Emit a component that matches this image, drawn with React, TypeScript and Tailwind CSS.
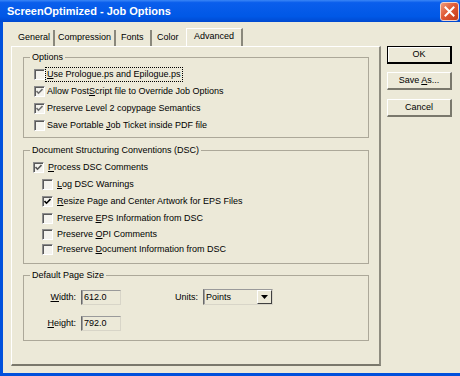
import React from "react";

function Check({ color }: { color: string }) {
  return (
    <svg width="7" height="7" viewBox="0 0 7 7" className="absolute left-[1px] top-[1px]">
      <path d="M0.5 3 L2.5 5.2 L6.5 1" fill="none" stroke={color} strokeWidth="1.6" />
    </svg>
  );
}

function Box({ checked, color = "#000" }: { checked?: boolean; color?: string }) {
  return (
    <span className="relative block w-[11px] h-[11px] shrink-0 border border-t-[#8c8c8c] border-l-[#8c8c8c] border-r-white border-b-white bg-[#f4f3ee] shadow-[inset_1px_1px_0_#5a5a5a]">
      {checked ? <Check color={color} /> : null}
    </span>
  );
}

function U({ children }: { children: React.ReactNode }) {
  return <span className="underline underline-offset-[1px]">{children}</span>;
}

function Row({
  h,
  checked,
  color,
  boxLeft,
  gap,
  focus,
  children,
}: {
  h: string;
  checked?: boolean;
  color?: string;
  boxLeft: string;
  gap: string;
  focus?: boolean;
  children: React.ReactNode;
}) {
  return (
    <div className={`flex items-center ${h} ${boxLeft}`}>
      <Box checked={checked} color={color} />
      <span className={`${gap} whitespace-nowrap leading-[11px] ${focus ? "outline outline-1 outline-dotted outline-[#000] outline-offset-[1px]" : ""}`}>
        {children}
      </span>
    </div>
  );
}

function Field({ value }: { value: string }) {
  return (
    <div className="w-[40px] h-[15px] border border-t-[#9a9a9a] border-l-[#6a6a6a] border-r-[#d8d5c8] border-b-[#d8d5c8] shadow-[inset_1px_0_0_#a0a0a0] bg-[#ECE9D8] pl-[2px] flex items-center leading-[11px]">
      {value}
    </div>
  );
}

export default function App() {
  return (
    <div className="w-[460px] h-[376px] flex flex-col bg-[#0050DC] overflow-hidden font-['Liberation_Sans',Arial,sans-serif] text-[9px] text-black">
      {/* title bar */}
      <div className="h-[22px] shrink-0 flex items-center justify-between pl-[7px] pr-[1px] bg-[linear-gradient(to_bottom,#3A86F6_0%,#0A5EEC_12%,#0058E6_75%,#0049D0_100%)]">
        <span className="text-white font-bold text-[11px] leading-[12px]">
          ScreenOptimized - Job Options
        </span>
        <div className="w-[19px] h-[19px] rounded-[3px] border border-[#f2d2c8] bg-[linear-gradient(135deg,#EE9A7C_0%,#E05A36_45%,#C53A18_100%)] flex items-center justify-center">
          <svg width="11" height="11" viewBox="0 0 11 11">
            <path d="M1.5 1.5 L9.5 9.5 M9.5 1.5 L1.5 9.5" stroke="#fff" strokeWidth="2" strokeLinecap="square" />
          </svg>
        </div>
      </div>

      {/* body */}
      <div className="flex-1 flex pl-[3px] pb-[3px]">
        <div className="flex-1 bg-[#ECE9D8] flex pl-[8px] pt-[6px] gap-[6px]">
          {/* tab control */}
          <div className="w-[370px] flex flex-col">
            <div className="h-[18px] flex items-end">
              <div className="h-[16px] w-[44px] pl-[7px] flex items-center border-r-2 border-r-[#8a887c]">
                General
              </div>
              <div className="h-[16px] w-[61px] pl-[3px] flex items-center border-r-2 border-r-[#8a887c]">
                Compression
              </div>
              <div className="h-[16px] w-[36px] pl-[5px] flex items-center border-r-2 border-r-[#8a887c]">
                Fonts
              </div>
              <div className="h-[16px] w-[34px] pl-[5px] flex items-center">Color</div>
              <div className="h-[18px] w-[57px] pl-[7px] pb-[2px] flex items-center border-l border-l-white border-t border-t-white border-r-2 border-r-[#8a887c]">
                Advanced
              </div>
            </div>
            <div className="h-[320px] flex flex-col border-t border-l border-t-white border-l-white border-r-2 border-b-2 border-r-[#8e8c80] border-b-[#7a786c] pl-[11px] pr-[10px]">
              {/* Options */}
              <fieldset className="mt-[5px] border border-[#aca899] pb-[3px]">
                <legend className="ml-[6px] px-[2px] leading-[10px]">Options</legend>
                <div className="pt-[4px]">
                  <Row h="h-[17px]" boxLeft="pl-[10px]" gap="ml-[2px]" focus>
                    <U>U</U>se Prologue.ps and Epilogue.ps
                  </Row>
                  <Row h="h-[17px]" boxLeft="pl-[10px]" gap="ml-[2px]" checked color="#6e6e6e">
                    Allow Post<U>S</U>cript file to Override Job Options
                  </Row>
                  <Row h="h-[17px]" boxLeft="pl-[10px]" gap="ml-[2px]" checked color="#6e6e6e">
                    Preserve Level 2 copypage Semantics
                  </Row>
                  <Row h="h-[17px]" boxLeft="pl-[10px]" gap="ml-[2px]">
                    Save Portable <U>J</U>ob Ticket inside PDF file
                  </Row>
                </div>
              </fieldset>

              {/* DSC */}
              <fieldset className="mt-[7px] border border-[#aca899] pb-[6px]">
                <legend className="ml-[6px] px-[2px] leading-[10px]">
                  Document Structuring Conventions (DSC)
                </legend>
                <div className="pt-[4px]">
                  <Row h="h-[17px]" boxLeft="pl-[9px]" gap="ml-[4px]" checked color="#555">
                    <U>P</U>rocess DSC Comments
                  </Row>
                  <Row h="h-[17px]" boxLeft="pl-[18px]" gap="ml-[4px]">
                    <U>L</U>og DSC Warnings
                  </Row>
                  <Row h="h-[17px]" boxLeft="pl-[18px]" gap="ml-[4px]" checked color="#000">
                    <U>R</U>esize Page and Center Artwork for EPS Files
                  </Row>
                  <Row h="h-[16px]" boxLeft="pl-[18px]" gap="ml-[4px]">
                    Preserve <U>E</U>PS Information from DSC
                  </Row>
                  <Row h="h-[16px]" boxLeft="pl-[18px]" gap="ml-[4px]">
                    Preserve <U>O</U>PI Comments
                  </Row>
                  <Row h="h-[15px]" boxLeft="pl-[18px]" gap="ml-[4px]">
                    Preserve <U>D</U>ocument Information from DSC
                  </Row>
                </div>
              </fieldset>

              {/* Default Page Size */}
              <fieldset className="mt-[6px] border border-[#aca899] pb-[9px]">
                <legend className="ml-[6px] px-[2px] leading-[10px]">Default Page Size</legend>
                <div className="pt-[9px] flex flex-col gap-[11px]">
                  <div className="flex items-center">
                    <span className="w-[52px] text-right leading-[11px]">
                      <U>W</U>idth:
                    </span>
                    <span className="ml-[5px]">
                      <Field value="612.0" />
                    </span>
                    <span className="ml-[54px] leading-[11px]">Units:</span>
                    <div className="ml-[5px] w-[70px] h-[16px] border border-t-[#9a9a9a] border-l-[#6a6a6a] border-r-[#d8d5c8] border-b-[#d8d5c8] shadow-[inset_1px_0_0_#a0a0a0] bg-[#ECE9D8] flex items-center justify-between">
                      <span className="pl-[2px] leading-[11px]">Points</span>
                      <span className="w-[15px] h-[14px] border border-t-white border-l-white border-r-[#404040] border-b-[#404040] bg-[#ECE9D8] flex items-center justify-center">
                        <svg width="7" height="4" viewBox="0 0 7 4">
                          <path d="M0 0 H7 L3.5 4 Z" fill="#000" />
                        </svg>
                      </span>
                    </div>
                  </div>
                  <div className="flex items-center">
                    <span className="w-[52px] text-right leading-[11px]">
                      <U>H</U>eight:
                    </span>
                    <span className="ml-[5px]">
                      <Field value="792.0" />
                    </span>
                  </div>
                </div>
              </fieldset>
            </div>
          </div>

          {/* buttons */}
          <div className="w-[65px] flex flex-col pt-[18px]">
            <div className="h-[18px] border border-black border-r-2 border-b-2 flex items-center justify-center leading-[11px] shadow-[inset_1px_1px_0_#fff]">
              <span>OK</span>
            </div>
            <div className="mt-[8px] h-[18px] border border-t-white border-l-white border-r-2 border-b-2 border-r-[#7a786c] border-b-[#7a786c] flex items-center justify-center leading-[11px]">
              <span className="whitespace-pre">
                Save <U>A</U>s...
              </span>
            </div>
            <div className="mt-[9px] h-[18px] border border-t-white border-l-white border-r-2 border-b-2 border-r-[#7a786c] border-b-[#7a786c] flex items-center justify-center leading-[11px]">
              <span>Cancel</span>
            </div>
          </div>
        </div>
      </div>
    </div>
  );
}
